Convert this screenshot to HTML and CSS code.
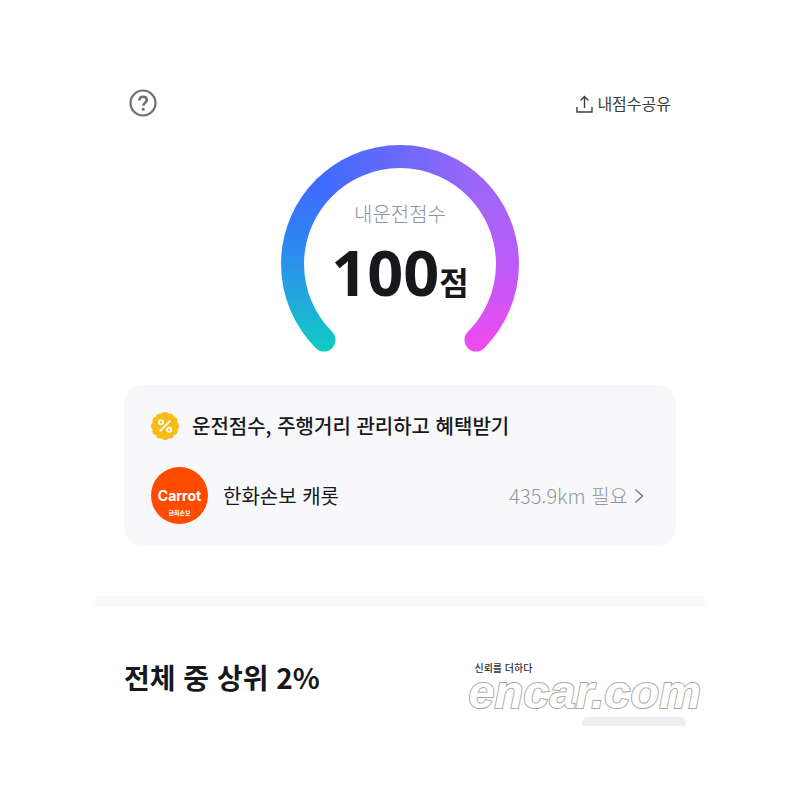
FILE: index.html
```html
<!DOCTYPE html>
<html lang="ko">
<head>
  <meta charset="UTF-8">
  <meta name="viewport" content="width=device-width, initial-scale=1.0">
  <title>내운전점수</title>
  <link rel="stylesheet" href="styles.css">
</head>
<body>
  <main class="page">
    <section class="score">
      <header class="score-header">
        <button type="button" class="icon-button" aria-label="도움말">
          <svg width="28" height="28" viewBox="0 0 28 28" fill="none" stroke="#6c7075" stroke-width="2.2">
            <circle cx="14" cy="14" r="12.5"/>
            <path d="M10.4 11.4c0-2.2 1.5-3.6 3.7-3.6s3.7 1.4 3.7 3.2c0 2.5-3.5 2.8-3.5 5.8" stroke-width="2.5"/>
            <circle cx="14.2" cy="20.3" r="1.5" fill="#6c7075" stroke="none"/>
          </svg>
        </button>
        <button type="button" class="share">
          <svg width="17" height="22" viewBox="0 0 17 22" fill="none" stroke="#3c3e42" stroke-width="1.4">
            <path d="M1 15V20H16V15M8.5 16V4.5M4.5 8.5L8.5 4.5L12.5 8.5"/>
          </svg>
          내점수공유
        </button>
      </header>

      <div class="gauge">
        <svg class="gauge-arc" viewBox="0 0 240 208" fill="none" stroke-width="23">
          <defs>
            <linearGradient id="arc-left" gradientUnits="userSpaceOnUse" x1="0" y1="204" x2="0" y2="44">
              <stop offset="0" stop-color="#0fcbc4"/>
              <stop offset=".3" stop-color="#22a9dc"/>
              <stop offset=".65" stop-color="#2c87f2"/>
              <stop offset="1" stop-color="#406bff"/>
            </linearGradient>
            <linearGradient id="arc-top" gradientUnits="userSpaceOnUse" x1="44" y1="0" x2="196" y2="0">
              <stop offset="0" stop-color="#406bff"/>
              <stop offset=".5" stop-color="#6a69fb"/>
              <stop offset="1" stop-color="#9d66f8"/>
            </linearGradient>
            <linearGradient id="arc-right" gradientUnits="userSpaceOnUse" x1="0" y1="44" x2="0" y2="200">
              <stop offset="0" stop-color="#9d66f8"/>
              <stop offset=".5" stop-color="#bd5bf8"/>
              <stop offset="1" stop-color="#ed4bf0"/>
            </linearGradient>
          </defs>
          <path d="M44 196A107.5 107.5 0 0 1 44 44" stroke="url(#arc-left)" stroke-linecap="round"/>
          <path d="M196 44A107.5 107.5 0 0 1 196 196" stroke="url(#arc-right)" stroke-linecap="round"/>
          <path d="M44 44A107.5 107.5 0 0 1 196 44" stroke="url(#arc-top)"/>
        </svg>
        <div class="gauge-text">
          <h1 class="gauge-label">내운전점수</h1>
          <p class="gauge-value">100<span class="gauge-unit">점</span></p>
        </div>
      </div>

      <div class="benefit">
        <h2 class="benefit-title">
          <svg width="28" height="28" viewBox="0 0 28 28" fill="none">
            <g fill="#f8bb18">
              <circle cx="14" cy="14" r="12"/>
              <circle cx="14" cy="3.9" r="3.9"/>
              <circle cx="19" cy="5.3" r="3.9"/>
              <circle cx="22.7" cy="9" r="3.9"/>
              <circle cx="24.1" cy="14" r="3.9"/>
              <circle cx="22.7" cy="19" r="3.9"/>
              <circle cx="19" cy="22.7" r="3.9"/>
              <circle cx="14" cy="24.1" r="3.9"/>
              <circle cx="9" cy="22.7" r="3.9"/>
              <circle cx="5.3" cy="19" r="3.9"/>
              <circle cx="3.9" cy="14" r="3.9"/>
              <circle cx="5.3" cy="9" r="3.9"/>
              <circle cx="9" cy="5.3" r="3.9"/>
            </g>
            <g stroke="#fff" stroke-width="1.8" stroke-linecap="round">
              <path d="M9.2 18.8L18.8 9.2"/>
              <circle cx="9.9" cy="10.2" r="2.1"/>
              <circle cx="18.1" cy="17.8" r="2.1"/>
            </g>
          </svg>
          운전점수, 주행거리 관리하고 혜택받기
        </h2>
        <a class="partner" href="#">
          <span class="partner-logo">
            <b class="logo-name">Carrot</b>
            <span class="logo-sub">한화손보</span>
          </span>
          <span class="partner-name">한화손보 캐롯</span>
          <span class="partner-need">435.9km 필요</span>
          <svg width="10" height="16" viewBox="0 0 10 16" fill="none" stroke="#777a80" stroke-width="1.4">
            <path d="M1.5 1.5L8.5 8L1.5 14.5"/>
          </svg>
        </a>
      </div>
    </section>

    <section class="rank">
      <h2 class="rank-title">전체 중 상위 2%</h2>
      <div class="brand">
        <span class="brand-slogan">신뢰를 더하다</span>
        <span class="brand-name">encar.com</span>
        <span class="rank-tab"></span>
      </div>
    </section>
  </main>
</body>
</html>
```

FILE: styles.css
```css
* { box-sizing: border-box; }
body { margin: 0; padding: 75px 0; color: #17181b; background-color: #fff; font-family: "Noto Sans CJK KR", sans-serif; }
h1, h2, p { margin: 0; }
button { padding: 0; border: 0; background: none; font-family: inherit; cursor: pointer; }
svg { display: block; flex: none; }

.page { max-width: 610px; margin: 0 auto; }

/* 점수 */
.score { padding: 14px 29px 51px; border-bottom: 11px solid #f9f9fa; }
.score-header { display: flex; align-items: center; justify-content: space-between; padding: 0 5px; }
.share { display: flex; align-items: center; gap: 4px; color: #3c3e42; font-size: 16px; line-height: 28px; }

.gauge { display: grid; justify-content: center; margin-top: 27px; }
.gauge-arc { grid-area: 1 / 1; width: 240px; }
.gauge-text { grid-area: 1 / 1; padding-top: 55px; text-align: center; }
.gauge-label { color: #8e939b; font-size: 20px; font-weight: 300; line-height: 30px; }
.gauge-value { display: flex; align-items: flex-end; justify-content: center; font-family: "Noto Sans", "Noto Sans CJK KR", sans-serif; font-size: 63px; font-weight: 700; line-height: 86px; }
.gauge-unit { font-size: 32px; line-height: 64px; }

/* 혜택 카드 */
.benefit { margin-top: 33px; padding: 26px 32px 21px 27px; border-radius: 18px; background-color: #f8f8fb; }
.benefit-title { display: flex; align-items: center; gap: 13px; font-size: 20px; font-weight: 500; line-height: 30px; }
.partner { display: flex; align-items: center; margin-top: 26px; color: inherit; font-size: 20px; line-height: 30px; text-decoration: none; }
.partner-logo { display: flex; flex-direction: column; align-items: center; flex: none; width: 57px; height: 57px; padding-top: 20px; border-radius: 50%; color: #fff; background-color: #ff4b00; }
.logo-name { font-family: Inter, sans-serif; font-size: 14px; line-height: 18px; }
.logo-sub { font-size: 6px; font-weight: 700; line-height: 16px; }
.partner-name { margin-left: 15px; }
.partner-need { margin: 0 6px 0 auto; color: #92979c; font-weight: 300; }

/* 순위 */
.rank { display: flex; justify-content: space-between; padding: 46px 4px 0 29px; }
.rank-title { font-size: 28px; font-weight: 700; line-height: 48px; }
.brand { display: flex; flex-direction: column; }
.brand-slogan { padding: 8px 0 0 6px; color: #333; font-size: 10px; font-weight: 500; line-height: 14px; }
.brand-name { color: #fff; font-family: "Liberation Sans", sans-serif; font-size: 47px; font-style: italic; font-weight: 700; line-height: 34px; padding-bottom: 8px; -webkit-text-stroke: 2px #aaa; paint-order: stroke; }
.rank-tab { align-self: flex-end; width: 104px; height: 9px; margin-right: 15px; border-radius: 6px 6px 0 0; background-color: #eeeef5; }
```
